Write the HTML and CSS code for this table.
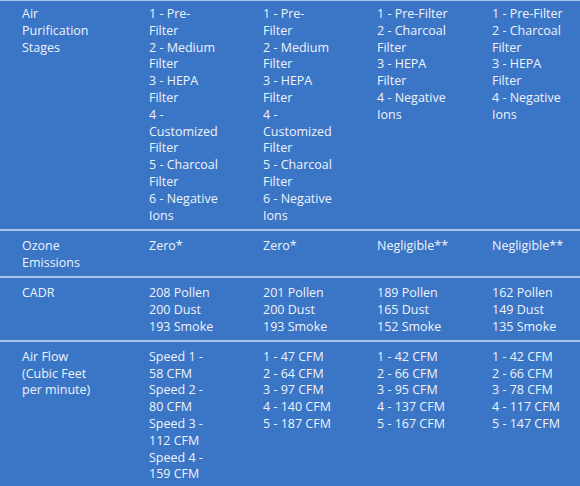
FILE: index.html
```html
<!DOCTYPE html>
<html>
<head>
<meta charset="utf-8">
<link rel="stylesheet" href="styles.css">
</head>
<body>
<table class="specs">
  <colgroup>
    <col class="col-label">
    <col class="col-a">
    <col class="col-b">
    <col class="col-c">
    <col class="col-d">
  </colgroup>
  <tbody>
    <tr>
      <td>Air Purification Stages</td>
      <td>1 - Pre-Filter<br>2 - Medium Filter<br>3 - HEPA Filter<br>4 - Customized Filter<br>5 - Charcoal Filter<br>6 - Negative Ions</td>
      <td>1 - Pre-Filter<br>2 - Medium Filter<br>3 - HEPA Filter<br>4 - Customized Filter<br>5 - Charcoal Filter<br>6 - Negative Ions</td>
      <td>1 - Pre-Filter<br>2 - Charcoal Filter<br>3 - HEPA Filter<br>4 - Negative Ions</td>
      <td>1 - Pre-Filter<br>2 - Charcoal Filter<br>3 - HEPA Filter<br>4 - Negative Ions</td>
    </tr>
    <tr>
      <td>Ozone Emissions</td>
      <td>Zero*</td>
      <td>Zero*</td>
      <td>Negligible**</td>
      <td>Negligible**</td>
    </tr>
    <tr>
      <td>CADR</td>
      <td>208 Pollen<br>200 Dust<br>193 Smoke</td>
      <td>201 Pollen<br>200 Dust<br>193 Smoke</td>
      <td>189 Pollen<br>165 Dust<br>152 Smoke</td>
      <td>162 Pollen<br>149 Dust<br>135 Smoke</td>
    </tr>
    <tr>
      <td>Air Flow (Cubic Feet per minute)</td>
      <td>Speed 1 - 58 CFM<br>Speed 2 - 80 CFM<br>Speed 3 - 112 CFM<br>Speed 4 - 159 CFM</td>
      <td>1 - 47 CFM<br>2 - 64 CFM<br>3 - 97 CFM<br>4 - 140 CFM<br>5 - 187 CFM</td>
      <td>1 - 42 CFM<br>2 - 66 CFM<br>3 - 95 CFM<br>4 - 137 CFM<br>5 - 167 CFM</td>
      <td>1 - 42 CFM<br>2 - 66 CFM<br>3 - 78 CFM<br>4 - 117 CFM<br>5 - 147 CFM</td>
    </tr>
  </tbody>
</table>
</body>
</html>
```
FILE: styles.css
```css
html, body {
  margin: 0;
  padding: 0;
  overflow: hidden;
  background: #3a75c6;
}

body {
  width: 580px;
  height: 486px;
  font-family: "Open Sans", "Noto Sans", sans-serif;
  font-size: 12.5px;
  line-height: 16.8px;
  color: #eef3fb;
}

.specs {
  table-layout: fixed;
  width: 607px;
  border-collapse: collapse;
  border-top: 1px solid #a9c3ea;
}

.col-label { width: 149px; }
.col-a { width: 114px; }
.col-b { width: 114px; }
.col-c { width: 115px; }
.col-d { width: 115px; }

.specs td {
  vertical-align: top;
  padding: 7px 44px 4.5px 0;
  border-bottom: 2px solid #a9c3ea;
}

.specs tr:first-child td {
  padding-top: 5px;
}

.specs tr:last-child td {
  border-bottom: none;
}

.specs td:first-child {
  padding-left: 22px;
  padding-right: 48px;
}

.specs td:nth-child(4),
.specs td:nth-child(5) {
  padding-right: 36px;
}
```
